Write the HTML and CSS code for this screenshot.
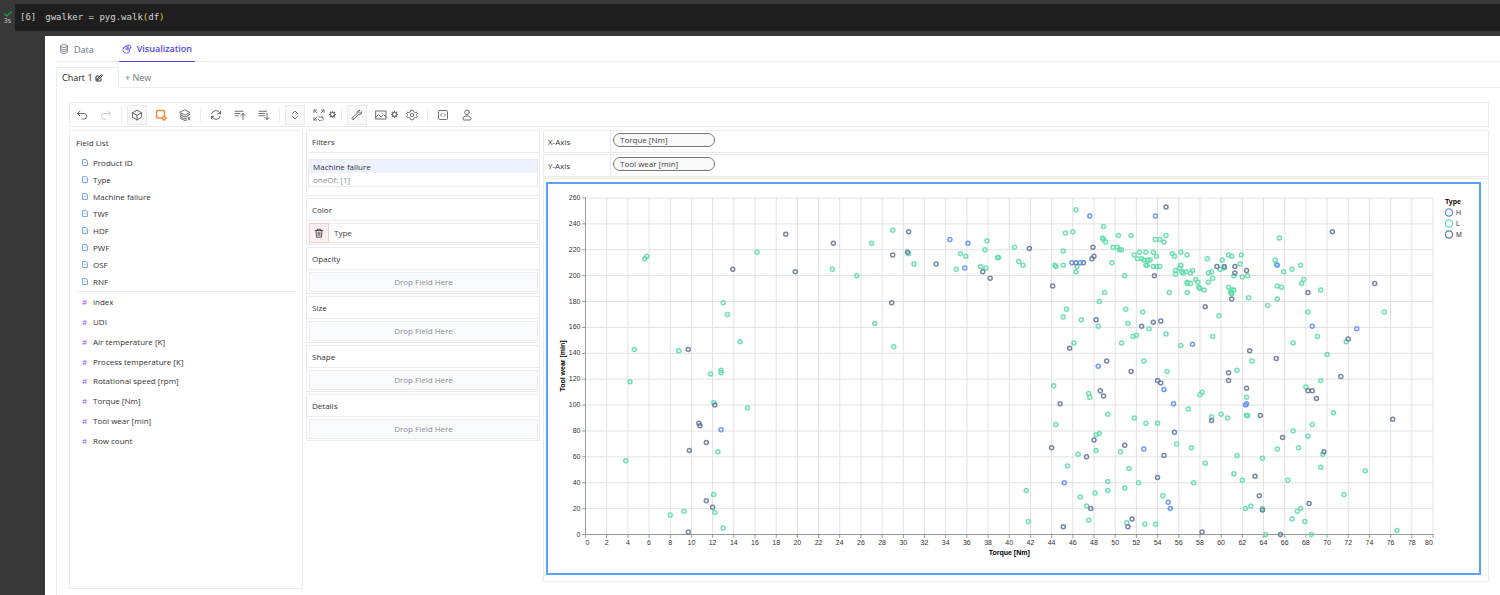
FILE: index.html
```html
<!DOCTYPE html>
<html lang="en">
<head>
    <meta charset="UTF-8">
    <meta name="viewport" content="width=device-width, initial-scale=1.0">
    <title>gwalker</title>
    <link rel="stylesheet" href="styles.css">
</head>
<body>
    <div class="cell">
        <div class="status">
            <svg viewBox="0 0 12 8"><path d="M1 4l3 3 7-6"/></svg>
            <span>3s</span>
        </div>
        <pre class="code"><span class="count">[6]</span>gwalker = pyg.walk<b>(</b>df<b>)</b></pre>
    </div>

    <main class="output">
        <nav class="tabs">
            <button class="tab">
                <svg viewBox="0 0 24 24"><ellipse cx="12" cy="5" rx="8" ry="3.5"/><path d="M4 5v14c0 2 3.600 3.500 8 3.500s8-1.500 8-3.500V5M4 10c0 2 3.600 3.500 8 3.500s8-1.500 8-3.500M4 14.500c0 2 3.600 3.500 8 3.500s8-1.500 8-3.500"/></svg>
                Data
            </button>
            <button class="tab active">
                <svg viewBox="0 0 24 24"><path d="M10 5a8.500 8.500 0 1 0 9 9h-9V5z"/><path d="M14 10h8a8 8 0 0 0-8-8v8z"/></svg>
                Visualization
            </button>
        </nav>

        <div class="charts">
            <button class="chart-tab active">Chart 1
                <svg viewBox="0 0 24 24"><path d="M16.900 4.500l1.700-1.700a1.900 1.900 0 1 1 2.600 2.600L10.600 16.100a4.500 4.500 0 0 1-1.900 1.100L6 18l.8-2.700a4.500 4.500 0 0 1 1.100-1.900zM18 14v4.800A2.200 2.200 0 0 1 15.800 21H5.200A2.200 2.200 0 0 1 3 18.800V8.200A2.200 2.200 0 0 1 5.200 6H10"/></svg>
            </button>
            <button class="chart-tab">+ New</button>
        </div>

        <div class="workspace">
            <div class="toolbar">
                <button aria-label="Undo"><svg viewBox="0 0 24 24"><path d="M8 14L3 9l5-5M3 9h13a5.500 5.500 0 0 1 0 11h-4"/></svg></button>
                <button aria-label="Redo" disabled><svg viewBox="0 0 24 24"><path d="M16 14l5-5-5-5M21 9H8a5.500 5.500 0 0 0 0 11h4"/></svg></button>
                <i class="sep"></i>
                <button class="on" aria-label="Aggregation"><svg viewBox="0 0 24 24"><path d="M21 7.500l-9-5.200-9 5.200m18 0l-9 5.200m9-5.200v9l-9 5.200M3 7.500l9 5.200M3 7.500v9l9 5.200m0-9v9"/></svg></button>
                <button class="mark" aria-label="Mark type"><svg viewBox="0 0 24 24"><path d="M13 18H5a2 2 0 0 1-2-2V5a2 2 0 0 1 2-2h12a2 2 0 0 1 2 2v8"/><path d="M18 14l4.500 4-4.500 4.500-4-4.500z"/></svg></button>
                <button aria-label="Stack mode"><svg viewBox="0 0 24 24"><path d="M12 2l10 5-10 5L2 7zM5 9.500L2 11l10 5 10-5-3-1.500M5 13.500L2 15l10 5 4-2M5 17.500L3 19l9 4 3-1M18 16l4 6M22 16l-4 6"/></svg></button>
                <i class="sep"></i>
                <button aria-label="Transpose"><svg viewBox="0 0 24 24"><path d="M16 9.300h5V4.500M3 19.600v-5h5M3.500 9.500A8.500 8.500 0 0 1 18 6l3 3.300M3 14.600L6 18a8.500 8.500 0 0 0 14.500-3.500"/></svg></button>
                <button aria-label="Sort ascending"><svg viewBox="0 0 24 24"><path d="M2 4.500h16M2 9h10M2 13.500h7M18 21V9m0 0l-4 4m4-4l4 4"/></svg></button>
                <button aria-label="Sort descending"><svg viewBox="0 0 24 24"><path d="M2 4.500h15M2 9h11M2 13.500h11M18 8v13m0 0l4-4m-4 4l-4-4"/></svg></button>
                <i class="sep"></i>
                <button class="on" aria-label="Axis resolve"><svg viewBox="0 0 24 24"><path d="M7 9l5-5 5 5M7 15l5 5 5-5"/></svg></button>
                <button aria-label="Layout mode"><svg viewBox="0 0 24 24"><path d="M2 7V2h5M2 2l6 6M22 7V2h-5M22 2l-6 6M2 17v5h5M2 22l6-6M12 16h8v5l-3 3h-3l-4-4"/></svg></button>
                <button class="gear" aria-label="Layout settings"><svg viewBox="0 0 12 12"><circle cx="6" cy="6" r="3.500"/><path d="M6 0v2M6 10v2M0 6h2M10 6h2M2 2l1 1M9 9l1 1M10 2L9 3M3 9l-1 1"/></svg></button>
                <i class="sep"></i>
                <button class="on" aria-label="Debug"><svg viewBox="0 0 24 24"><path d="M21.500 6a5 5 0 0 1-7 5L6 20.500a2.300 2.300 0 0 1-3.300-3.300L12.500 9a5 5 0 0 1 5.500-6.500l-3 3.500 2.500 2.500zM5 18.500v.1"/></svg></button>
                <button aria-label="Export image"><svg viewBox="0 0 24 24"><path d="M2 16l5-5 5 5 2-2 3-3 5 5M2 4h20v16H2zM14 8.500v.1"/></svg></button>
                <button class="gear" aria-label="Export settings"><svg viewBox="0 0 12 12"><circle cx="6" cy="6" r="3.500"/><path d="M6 0v2M6 10v2M0 6h2M10 6h2M2 2l1 1M9 9l1 1M10 2L9 3M3 9l-1 1"/></svg></button>
                <button aria-label="Config"><svg viewBox="0 0 24 24"><path d="M9.500 2.500h5l.8 3 3 1.500 3-.7 1.500 3.500L20.500 12l2.300 2.200-1.500 3.500-3-.7-3 1.500-.8 3h-5l-.8-3-3-1.500-3 .7-1.500-3.500L3.500 12 1.200 9.800l1.500-3.500 3 .7 3-1.500z"/><circle cx="12" cy="12" r="3.500"/></svg></button>
                <i class="sep"></i>
                <button aria-label="Export code"><svg viewBox="0 0 24 24"><path d="M9.500 9.500L7 12l2.500 2.500M14.500 9.500L17 12l-2.500 2.500"/><rect x="3" y="3" width="18" height="18" rx="2"/></svg></button>
                <button aria-label="Account"><svg viewBox="0 0 24 24"><circle cx="12" cy="6.500" r="4.500"/><path d="M8.500 14h7l4.500 5-1 3H5l-1-3z"/></svg></button>
            </div>

            <div class="columns">
                <section class="panel fields">
                    <h4>Field List</h4>
                    <ul class="dimensions">
                        <li>Product ID</li>
                        <li>Type</li>
                        <li>Machine failure</li>
                        <li>TWF</li>
                        <li>HDF</li>
                        <li>PWF</li>
                        <li>OSF</li>
                        <li>RNF</li>
                    </ul>
                    <ul class="measures">
                        <li>index</li>
                        <li>UDI</li>
                        <li>Air temperature [K]</li>
                        <li>Process temperature [K]</li>
                        <li>Rotational speed [rpm]</li>
                        <li>Torque [Nm]</li>
                        <li>Tool wear [min]</li>
                        <li>Row count</li>
                    </ul>
                </section>

                <div class="encodings">
                    <section class="panel filters">
                        <h4>Filters</h4>
                        <div class="filter">
                            <header>Machine failure</header>
                            <span>oneOf: [1]</span>
                        </div>
                    </section>
                    <section class="panel">
                        <h4>Color</h4>
                        <div class="slot filled">
                            <button aria-label="Remove Type"><svg viewBox="0 0 24 24"><path d="M3 6h18M8 6V3h8v3M5 6l1 16h12l1-16M10 10v8M14 10v8"/></svg></button>
                            <span>Type</span>
                        </div>
                    </section>
                    <section class="panel">
                        <h4>Opacity</h4>
                        <div class="slot">Drop Field Here</div>
                    </section>
                    <section class="panel">
                        <h4>Size</h4>
                        <div class="slot">Drop Field Here</div>
                    </section>
                    <section class="panel">
                        <h4>Shape</h4>
                        <div class="slot">Drop Field Here</div>
                    </section>
                    <section class="panel">
                        <h4>Details</h4>
                        <div class="slot">Drop Field Here</div>
                    </section>
                </div>

                <div class="view">
                    <div class="axis"><h4>X-Axis</h4><span class="pill">Torque [Nm]</span></div>
                    <div class="axis"><h4>Y-Axis</h4><span class="pill">Tool wear [min]</span></div>
                    <div class="panel canvas">
                        <div class="frame">
                            <svg id="chart" viewBox="0 0 931 389" role="img" aria-label="Tool wear by torque"></svg>
                        </div>
                    </div>
                </div>
            </div>
        </div>
    </main>

    <script src="script.js"></script>
</body>
</html>
```
FILE: styles.css
```css
:root {
    --dark: #383838;
    --code-bg: #1e1e1e;
    --line: #ececee;
    --text: #333;
    --muted: #8a9099;
    --indigo: #4f46e5;
    --blue: #5ba2fb;
}

*, *::before {
    box-sizing: border-box;
}

body {
    margin: 0;
    min-height: 100vh;
    display: flex;
    flex-direction: column;
    background-color: var(--dark);
    color: var(--text);
    font-family: "Open Sans", "Noto Sans", sans-serif;
    font-size: 8px;
}

h4, ul, pre {
    margin: 0;
    padding: 0;
    font-weight: normal;
    list-style: none;
}

button {
    margin: 0;
    padding: 0;
    border: 0;
    background: none;
    color: inherit;
    font: inherit;
    cursor: pointer;
}

svg {
    fill: none;
    stroke: currentColor;
    stroke-linecap: round;
    stroke-linejoin: round;
}

/* notebook cell */
.cell {
    display: flex;
    padding: 4px 0 5px;
}

.status {
    width: 15px;
    padding-top: 7px;
    display: flex;
    flex-direction: column;
    align-items: center;
    color: #ccc;
    font-size: 7px;
    line-height: 8px;
}

.status svg {
    width: 8px;
    height: 6px;
    stroke: #1a9c4b;
    stroke-width: 2;
}

.code {
    flex: 1;
    padding-left: 5px;
    background-color: var(--code-bg);
    color: #d4d4d4;
    font: 9px/27px "DejaVu Sans Mono", monospace;
}

.code b {
    color: #e8c219;
    font-weight: normal;
}

.count {
    margin-right: 9px;
}

/* output */
.output {
    flex: 1;
    margin-left: 45px;
    padding-left: 11px;
    background-color: #fff;
}

.tabs {
    display: flex;
    gap: 22px;
    height: 26px;
    border-bottom: 1px solid var(--line);
}

.tab {
    height: 26px;
    padding: 0 3px;
    display: flex;
    align-items: center;
    gap: 5px;
    color: #6b7280;
    font-size: 9px;
    font-weight: 500;
}

.tab svg {
    width: 10px;
    height: 10px;
    stroke-width: 2;
}

.tab.active {
    border-bottom: 1px solid var(--indigo);
    color: var(--indigo);
    font-weight: 600;
}

.charts {
    display: flex;
    height: 26px;
    padding-top: 5px;
    border-bottom: 1px solid var(--line);
}

.chart-tab {
    height: 20px;
    padding: 0 6px;
    color: #71767f;
    font-size: 9px;
}

.chart-tab.active {
    width: 63px;
    height: 21px;
    padding: 0 5px;
    border: 1px solid var(--line);
    border-bottom-color: #fff;
    color: #222;
    text-align: left;
}

.chart-tab svg {
    width: 8px;
    height: 8px;
    stroke-width: 3;
    vertical-align: -1px;
}

.workspace {
    padding: 14px 11px 7px 12px;
    border-left: 1px solid var(--line);
    display: flex;
    flex-direction: column;
    gap: 3px;
}

.toolbar {
    display: flex;
    align-items: center;
    gap: 4px;
    height: 25px;
    padding: 0 2px;
    border: 1px solid var(--line);
    color: #6e6e6e;
}

.toolbar button {
    width: 20px;
    height: 20px;
    display: flex;
    align-items: center;
    justify-content: center;
}

.toolbar svg {
    width: 12px;
    height: 12px;
    stroke-width: 2;
}

.toolbar button:disabled {
    color: #ccc;
}

.toolbar .on {
    background-color: #f9f9fa;
    border: 1px solid #ebebed;
}

.toolbar .mark {
    color: #fb8a3c;
}

.toolbar .mark svg {
    stroke-width: 3;
}

.toolbar .gear {
    width: 7px;
    margin-left: -4px;
}

.toolbar .gear svg {
    width: 7px;
    height: 7px;
    stroke-width: 2;
}

.sep {
    width: 1px;
    height: 16px;
    margin: 0 1px;
    background-color: var(--line);
}

.columns {
    display: grid;
    grid-template-columns: 234px 234px 1fr;
    gap: 3px;
}

.panel {
    border: 1px solid var(--line);
}

/* field list */
.fields {
    padding: 0 6px;
}

.fields h4 {
    line-height: 23px;
}

.fields li {
    display: flex;
    align-items: center;
    gap: 4px;
    padding-left: 6px;
}

.dimensions {
    padding-bottom: 1px;
    border-bottom: 1px solid var(--line);
}

.dimensions li {
    height: 17px;
}

.dimensions li::before {
    content: "";
    width: 6px;
    height: 7px;
    margin-right: 1px;
    border: 1px solid #70a5f8;
    border-radius: 1px 3px 1px 1px;
    background: linear-gradient(#bcd5fc, #bcd5fc) center / 2px 1px no-repeat;
}

.measures {
    display: grid;
    grid-auto-rows: 1fr;
    height: 158px;
}

.measures li::before {
    content: "#";
    width: 7px;
    color: #a855f7;
}

/* encodings */
.encodings {
    display: flex;
    flex-direction: column;
    gap: 2px;
}

.encodings h4 {
    padding-left: 5px;
    border-bottom: 1px solid var(--line);
    line-height: 21px;
}

.encodings .filters {
    height: 66px;
}

.filter {
    margin: 6px 1px;
    border: 1px solid var(--line);
    line-height: 13px;
}

.filter header {
    padding-left: 4px;
    background-color: #eef2ff;
}

.filter span {
    padding-left: 4px;
    color: var(--muted);
}

.slot {
    height: 20px;
    margin: 2px 1px 1px 2px;
    border: 1px solid var(--line);
    background-color: #f9fafb;
    color: var(--muted);
    line-height: 18px;
    text-align: center;
}

.slot.filled {
    display: flex;
    border-left: 0;
    background-color: #fff;
    color: #444;
}

.slot button {
    width: 20px;
    height: 20px;
    margin-top: -1px;
    margin-right: 5px;
    border: 1px solid #fcc9c9;
    background-color: #fef0f0;
    color: #333;
}

.slot svg {
    width: 10px;
    height: 10px;
    display: block;
    margin: auto;
    stroke-width: 2;
}

/* axes and chart */
.view {
    min-width: 0;
}

.axis {
    display: flex;
    height: 23px;
    margin-bottom: 1px;
    border: 1px solid var(--line);
}

.axis h4 {
    width: 67px;
    padding-left: 4px;
    border-right: 1px solid var(--line);
    line-height: 21px;
}

.pill {
    width: 102px;
    height: 14px;
    margin: 2px;
    padding-left: 6px;
    border: 1px solid #777;
    border-radius: 7px;
    background-color: #f9f9fa;
    color: #444;
    line-height: 12px;
}

.canvas {
    margin-bottom: 7px;
    padding: 3px 7px 6px 2px;
}

.frame {
    border: 2px solid var(--blue);
}

.frame svg {
    display: block;
    width: 100%;
    font-family: "Liberation Sans", Arial, sans-serif;
    font-size: 7px;
}

.frame text {
    fill: #333;
    stroke: none;
}

.frame .title {
    fill: #000;
    font-weight: bold;
}

.grid {
    stroke: #e2e2e2;
}

.domain {
    stroke: #999;
}

.point {
    stroke-opacity: 0.9;
}
```
FILE: script.js
```js
const svg = document.getElementById("chart");
const colors = { H: "#5B8FF9", L: "#61DDAA", M: "#65789B" };

const left = 37.5, right = 885, top_ = 14, bottom = 350.5;
const sx = v => left + v * (right - left) / 80;
const sy = v => bottom - v * (bottom - top_) / 260;

// torque, tool wear
const data = {
    L: [
        [5.8,215],[5.6,213],[16.2,218],[13,179],[13.4,170],[14.6,149],[4.6,143],[8.8,142],
        [4.2,118],[11.8,124],[12.8,127],[12.8,125],[12.1,102],[15.3,98],[3.8,57],[12.5,64],
        [12.1,31],[8,15],[9.3,18],[12.2,17],[13,5],
        [27,225],[29,235],[30.5,217],[31,209],[23.3,205],[25.6,200],[27.3,163],[29.1,145],
        [35,205],[35.4,217],[35.9,215],[37.9,227],[37.7,220],[37.3,207],[37.8,206],
        [38.9,214],[39,214],[40.5,222],[40.9,211],[41.3,208],[41.6,34],[41.8,10],
        [46.3,251],[45.3,233],[46,234],[45.1,219],[44.3,208],[44.4,207],[45.1,208],[46.4,207],[46.3,203],
        [48.9,238],[48.8,229],[48.9,228],[49.1,226],[50.3,231],[51.5,231],[49.8,222],[50.2,222],
        [50.4,220],[50.6,220],[49.7,210],[50.9,200],[51.8,216],[52.3,218],[52.9,218],[53.6,218],
        [53.9,215],[52.1,213],[52.5,213],[52.7,212],[53.1,212],[53.3,212],[52.9,208],[53,208],
        [53.6,207],[53.9,207],[54.2,207],[53.8,228],[54.2,228],[54.8,231],[54.6,226],
        [55.4,217],[55.6,215],[56.2,218],[56.8,216],[55.7,204],[55.7,201],[56.1,206],[56.2,208],
        [56.3,203],[56.4,202],[56.7,203],[57.1,202],[57.3,204],[55.1,187],[56.8,195],[56.8,194],
        [57.1,194],[56.8,187],[57.6,197],[57.8,195],[57.9,191],[58,190],[58.4,189],[58.8,195],
        [59.2,198],[58.8,202],[59.1,203],[58.7,213],[59.9,205],[60.1,212],[60.3,206],[60.7,216],
        [61,215],[61.9,216],[61.8,209],[61.2,200],[62,199],[62.5,200],[62.6,183],[60.7,191],
        [61,189],[61.2,189],[60.9,187],[61,187],[61,186],[49,187],[48.5,180],[45.4,174],[45.1,168],
        [46.8,166],[48.4,161],[51,174],[51.2,163],[52.6,172],[53.2,159],[52,154],[51.7,153],
        [50.6,148],[46.1,148],[54.8,155],[56.2,146],[59.2,153],[59.8,169],[52.7,134],[54.9,126],[61.5,127],
        [65.5,229],[65.1,212],[65.2,209],[65.9,203],[66.7,205],[67.5,208],[65.3,192],[65.7,191],
        [67.6,194],[67.8,197],[69.4,189],[65.3,182],[64.4,177],[68.2,172],[75.4,172],[69.1,153],
        [71.8,149],[66.8,148],[70,139],[62.9,134],[69.4,119],
        [44.2,115],[47.5,109],[47.6,106],[44.4,85],[49.3,93],[48.5,78],[48.2,77],[48.2,65],[46.5,62],
        [45.5,53],[50.5,64],[51.8,90],[52.9,86],[54,86],[51.3,51],[49.3,41],[49.3,34],[48.1,32],
        [46.7,29],[47.3,22],[47.5,11],[52.2,40],[50.9,36],[51.1,9],[52.8,8],[53.8,8],[54.5,30],
        [55.8,70],[57.2,67],[57.4,40],[58.5,55],[56.9,97],[58,108],[58.2,110],[59.1,91],[60,93],
        [60.6,90],[61.5,61],[61.2,47],[62,42],[62.3,20],[62.4,106],[62.4,92],[62.5,92],
        [68,114],[70.6,94],[68.6,85],[66.8,80],[68.2,76],[67.3,67],[65.3,66],[63.9,59],[69.6,62],
        [69.4,52],[73.6,49],[66.3,42],[71.6,31],[62.8,22],[63.9,20],[67.5,20],[67.2,18],[66.7,12],
        [67.9,10],[64.2,0],[68.5,0],[76.6,3]
    ],
    M: [
        [18.9,232],[13.9,205],[19.8,203],[9.7,143],[12.2,100],[10.7,86],[10.8,84],[11.4,71],
        [9.8,65],[11.4,26],[12,21],[9.7,2],[23.4,225],[30.5,234],[29,216],[30.4,218],[33.1,209],
        [28.9,179],[37.5,203],[38.2,198],[41.9,221],
        [54.8,253],[47.9,222],[48,215],[47.8,213],[46.3,210],[47,210],[44.1,192],[53.7,200],
        [59.6,207],[60.3,207],[61.3,207],[61.3,202],[62.4,204],[61,182],[58.5,176],[48.2,166],
        [52.5,161],[53.6,164],[54.3,165],[45.7,144],[49.2,134],[51.5,126],[60.7,125],[62.7,142],
        [70.5,234],[74.5,194],[68.2,187],[72,151],[65.2,136],[71.3,122],
        [54,119],[54.3,117],[60.7,119],[62.4,113],[48.6,111],[48.9,107],[44.8,101],[44,67],[48,73],
        [50.9,69],[47.3,60],[55.6,79],[54.6,61],[54,44],[47.7,20],[45.1,6],[51.6,12],[51.2,6],
        [58.2,2],[59.1,88],[68.2,111],[68.6,111],[69,105],[76.2,89],[63.7,92],[65.8,75],[69.7,64],
        [63.2,45],[63.6,30],[63.9,19],[68.3,24],[65.6,0]
    ],
    H: [
        [12.8,81],[34.4,228],[36.1,225],[35.8,206],[47.6,246],[53.8,246],[45.9,210],[46.7,210],
        [57.3,147],[48.4,130],[65.3,208],[68.6,161],[72.8,159],[54.6,112],[55.5,101],[52.7,66],
        [45.2,40],[55,25],[55.2,20],[62.3,100],[62.4,101]
    ]
};

function add(name, attrs, text) {
    const el = document.createElementNS("http://www.w3.org/2000/svg", name);
    for (const key in attrs) el.setAttribute(key, attrs[key]);
    if (text !== undefined) el.textContent = text;
    svg.appendChild(el);
}

function line(x1, y1, x2, y2, cls) {
    add("line", { x1, y1, x2, y2, class: cls });
}

for (let v = 0; v <= 80; v += 2) {
    line(sx(v), top_, sx(v), bottom, "grid");
    line(sx(v), bottom, sx(v), bottom + 3, "domain");
    // end labels are pulled inside the plot
    const shift = v === 0 ? 2 : v === 80 ? -4 : 0;
    add("text", { x: sx(v) + shift, y: bottom + 10, "text-anchor": "middle" }, v);
}

for (let v = 0; v <= 260; v += 20) {
    line(left, sy(v), right, sy(v), "grid");
    line(left - 3, sy(v), left, sy(v), "domain");
    add("text", { x: left - 5, y: sy(v) + 2, "text-anchor": "end" }, v);
}

line(left, top_, left, bottom, "domain");
line(left, bottom, right, bottom, "domain");

add("text", { x: (left + right) / 2, y: 371, "text-anchor": "middle", class: "title" }, "Torque [Nm]");
add("text", { x: 0, y: 0, transform: "translate(17 182) rotate(-90)", "text-anchor": "middle", class: "title" }, "Tool wear [min]");

for (const type of ["L", "M", "H"]) {
    for (const [x, y] of data[type]) {
        add("circle", { cx: sx(x), cy: sy(y), r: 2, stroke: colors[type], "stroke-width": 1.5, class: "point" });
    }
}

add("text", { x: 897, y: 20, class: "title" }, "Type");
["H", "L", "M"].forEach((type, i) => {
    const y = 28.5 + i * 11;
    add("circle", { cx: 901, cy: y, r: 3.6, stroke: colors[type], "stroke-width": 1.3 });
    add("text", { x: 908, y: y + 2.5 }, type);
});
```
